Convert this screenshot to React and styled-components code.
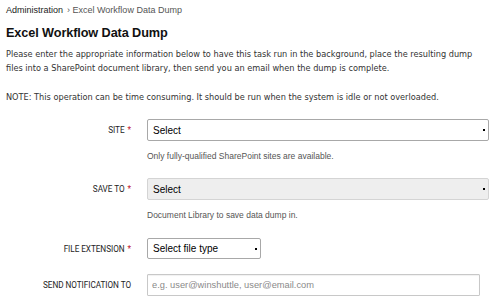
import React from 'react'
import styled, { createGlobalStyle } from 'styled-components'

const GlobalStyle = createGlobalStyle`
  body {
    margin: 0;
    background: #fff;
    font-family: "Liberation Sans", Arial, sans-serif;
    color: #333;
  }
`

const Page = styled.div`
  padding: 5px 11px 0 6px;
  width: 500px;
  height: 307px;
  box-sizing: border-box;
  overflow: hidden;
`

const Breadcrumb = styled.div`
  display: flex;
  align-items: center;
  gap: 4px;
  font-size: 9px;
  line-height: 11px;
  color: #222;
  span { color: #555; }
`

const Title = styled.h1`
  margin: 10px 0 0;
  font-size: 12.7px;
  line-height: 15px;
  font-weight: bold;
  color: #111;
  letter-spacing: -0.1px;
`

const Intro = styled.p`
  margin: ${props => props.$top}px 0 0;
  font-family: "DejaVu Sans", Verdana, sans-serif;
  font-size: 8.2px;
  line-height: 14px;
  color: #333;
`

const Form = styled.div`
  margin-top: 15px;
`

const Field = styled.div`
  display: grid;
  grid-template-columns: 125px 1fr;
  column-gap: 16px;
  align-items: center;
  margin-bottom: ${props => props.$gap}px;
`

const Label = styled.label`
  text-align: right;
  font-family: Roboto, "Liberation Sans", Arial, sans-serif;
  font-size: 8.2px;
  letter-spacing: -0.05px;
  text-transform: uppercase;
  color: #1e1e1e;
  white-space: nowrap;
  b {
    color: #c0152f;
    font-weight: normal;
    margin-left: 3px;
  }
`

const Help = styled.div`
  grid-column: 2;
  margin-top: 10px;
  font-size: 8.5px;
  line-height: 10px;
  color: #555;
`

const SelectBox = styled.div`
  position: relative;
  width: ${props => props.$width || '100%'};
  height: ${props => props.$height || 22}px;
  box-sizing: border-box;
  display: flex;
  align-items: center;
  padding-left: 5px;
  border: 1px solid ${props => (props.$disabled ? '#d4d4d4' : '#a8a8a8')};
  border-radius: 2px;
  background: ${props => (props.$disabled ? '#eeeeee' : '#fff')};
  font-size: 10px;
  color: #000;
`

const Caret = styled.span`
  position: absolute;
  right: 3px;
  top: 50%;
  margin-top: -1px;
  width: 2px;
  height: 2px;
  background: #000;
`

const TextInput = styled.input`
  width: 333px;
  height: 22px;
  box-sizing: border-box;
  padding: 0 4px;
  border: 1px solid #c8c8c8;
  border-radius: 1px;
  box-shadow: inset 0 1px 1px rgba(0, 0, 0, 0.06);
  font-family: "Liberation Sans", Arial, sans-serif;
  font-size: 9.3px;
  color: #000;
  outline: none;
  &::placeholder { color: #8a8a8a; }
`

const Select = ({ value, width, height, disabled }) => (
  <SelectBox $width={width} $height={height} $disabled={disabled}>
    {value}
    <Caret />
  </SelectBox>
)

export default function App() {
  return (
    <Page>
      <GlobalStyle />
      <Breadcrumb>
        Administration <span>› Excel Workflow Data Dump</span>
      </Breadcrumb>
      <Title>Excel Workflow Data Dump</Title>
      <Intro $top={6}>
        Please enter the appropriate information below to have this task run in the background, place the resulting dump
        files into a SharePoint document library, then send you an email when the dump is complete.
      </Intro>
      <Intro $top={15}>
        NOTE: This operation can be time consuming. It should be run when the system is idle or not overloaded.
      </Intro>
      <Form>
        <Field $gap={17}>
          <Label>Site<b>*</b></Label>
          <Select value="Select" />
          <Help>Only fully-qualified SharePoint sites are available.</Help>
        </Field>
        <Field $gap={18}>
          <Label>Save To<b>*</b></Label>
          <Select value="Select" disabled />
          <Help>Document Library to save data dump in.</Help>
        </Field>
        <Field $gap={15}>
          <Label>File Extension<b>*</b></Label>
          <Select value="Select file type" width="114px" height={21} />
        </Field>
        <Field $gap={0}>
          <Label>Send Notification To</Label>
          <TextInput placeholder="e.g. user@winshuttle, user@email.com" />
        </Field>
      </Form>
    </Page>
  )
}
